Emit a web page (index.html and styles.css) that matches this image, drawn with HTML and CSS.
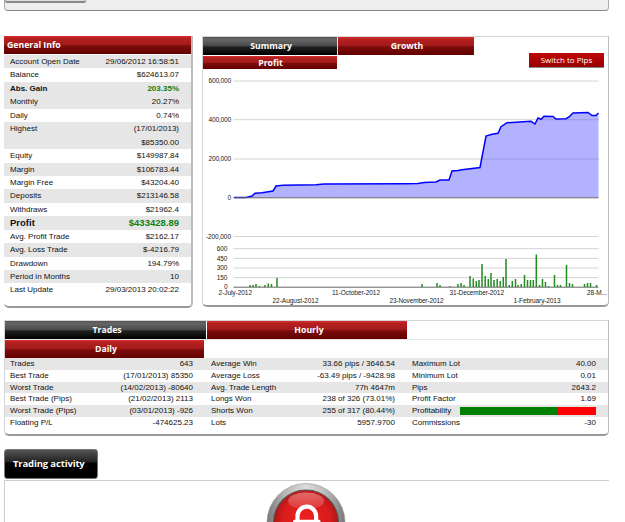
FILE: index.html
```html
<!DOCTYPE html>
<html lang="en">
<head>
  <meta charset="UTF-8">
  <title>Account Statistics</title>
  <link rel="stylesheet" href="styles.css">
</head>
<body>
  <div class="page">
    <div class="top-panel"><div class="top-button"></div></div>

    <div class="overview">
      <div class="panel info">
        <h2 class="bar">General Info</h2>
        <ul class="rows">
          <li class="alt"><span>Account Open Date</span><span>29/06/2012 16:58:51</span></li>
          <li><span>Balance</span><span>$624613.07</span></li>
          <li class="alt strong"><span>Abs. Gain</span><span class="green">203.35%</span></li>
          <li class="alt"><span>Monthly</span><span>20.27%</span></li>
          <li><span>Daily</span><span>0.74%</span></li>
          <li class="alt tall"><span>Highest</span><span>(17/01/2013)<br>$85350.00</span></li>
          <li><span>Equity</span><span>$149987.84</span></li>
          <li class="alt"><span>Margin</span><span>$106783.44</span></li>
          <li><span>Margin Free</span><span>$43204.40</span></li>
          <li class="alt"><span>Deposits</span><span>$213146.58</span></li>
          <li><span>Withdraws</span><span>$21962.4</span></li>
          <li class="alt profit"><span>Profit</span><span class="green">$433428.89</span></li>
          <li><span>Avg. Profit Trade</span><span>$2162.17</span></li>
          <li class="alt"><span>Avg. Loss Trade</span><span>$-4216.79</span></li>
          <li><span>Drawdown</span><span>194.79%</span></li>
          <li class="alt"><span>Period in Months</span><span>10</span></li>
          <li><span>Last Update</span><span>29/03/2013 20:02:22</span></li>
        </ul>
      </div>

      <div class="panel summary">
        <div class="tabs">
          <div class="bar tab active">Summary</div>
          <div class="bar tab growth">Growth</div>
        </div>
        <div class="tabs second">
          <div class="bar tab cut">Profit</div>
          <div class="switch">Switch to Pips</div>
        </div>
        <svg class="chart" width="406" height="236" viewBox="202 69 406 236">
          <g class="grid">
            <path d="M233.500 81H598.500M233.500 119.700H598.500M233.500 159H598.500M233.500 236.500H598.500"/>
            <path d="M233.500 248.700H598.500M233.500 258.400H598.500M233.500 268H598.500M233.500 277.600H598.500"/>
          </g>
          <path class="area" d="M234 197.500H246L252 196 255 193.300 262 192.700 273 191 276 186 283 185.300 316 184.800 324 184 405 183.800 418 183.500 424 182.500 436 182 440 180 449 180 452 171 458 170.500 462 169.700 480 167.500 486 136 492 134.300 498 133.300 501 126.700 507 122.700 531 121.300 535 124 538 118 541 119.300 544 116.300 553 116.500 556 119 566 118.700 569 117 573 113 588 112.500 592 115.500 596 115.500 598.500 113V197.500Z"/>
          <path class="under" d="M482 159H598.500M541 119.700H598.500"/>
          <path class="line" d="M234 197.500H246L252 196 255 193.300 262 192.700 273 191 276 186 283 185.300 316 184.800 324 184 405 183.800 418 183.500 424 182.500 436 182 440 180 449 180 452 171 458 170.500 462 169.700 480 167.500 486 136 492 134.300 498 133.300 501 126.700 507 122.700 531 121.300 535 124 538 118 541 119.300 544 116.300 553 116.500 556 119 566 118.700 569 117 573 113 588 112.500 592 115.500 596 115.500 598.500 113"/>
          <path class="axis" d="M233.500 197.800H598.500M233.500 287.200H598.500"/>
          <path class="bars" d="M250 287v-2M253 287v-2M256 287v-3M259.500 287v-1M265 287v-2M268.300 287v-3.500M271.500 287v-3M277 287v-9M422 287v-3M437 287v-4M440 287v-2M450 287v-1M458 287v-3M461 287v-4M464 287v-2M470 287v-11M473.300 287v-8.500M476.300 287v-6M479 287v-7M482 287v-23M485.200 287v-11M488.300 287v-8M491 287v-14M494 287v-7M497.200 287v-8M500.200 287v-6M503.300 287v-10M506 287v-28M509.300 287v-2M512.300 287v-6M515.500 287v-8M518 287v-2M521.200 287v-3M524.500 287v-12M527.500 287v-7M530.500 287v-7M533.300 287v-7M536.300 287v-32.500M539.500 287v-2M542.500 287v-8M545.500 287v-5M548.500 287v-1M554.500 287v-12M557.500 287v-2M560.500 287v-2M566.500 287v-22M569.500 287v-4M572.500 287v-3M584.500 287v-3M587.500 287v-4M590.500 287v-4M596.500 287v-2"/>
          <g class="labels end">
            <text x="231" y="83.300" textLength="22.500">600,000</text>
            <text x="231" y="122" textLength="22.500">400,000</text>
            <text x="231" y="161.300" textLength="22.500">200,000</text>
            <text x="231" y="200">0</text>
            <text x="231" y="238.800" textLength="25">-200,000</text>
            <text x="227.500" y="251.300">600</text>
            <text x="227.500" y="261">450</text>
            <text x="227.500" y="270.300">300</text>
            <text x="227.500" y="280">150</text>
            <text x="227.500" y="288.800">0</text>
          </g>
          <g class="labels">
            <text x="218.500" y="294.700" textLength="33.500">2-July-2012</text>
            <text x="332" y="294.700" textLength="48">11-October-2012</text>
            <text x="449.500" y="294.700" textLength="54.500">31-December-2012</text>
            <text x="587" y="294.700" textLength="20">28-M...</text>
            <text x="272.500" y="302.700" textLength="46">22-August-2012</text>
            <text x="389.500" y="302.700" textLength="54">23-November-2012</text>
            <text x="513.500" y="302.700" textLength="47">1-February-2013</text>
          </g>
        </svg>
      </div>
    </div>

    <div class="panel trades">
      <div class="tabs">
        <div class="bar tab active">Trades</div>
        <div class="bar tab hourly">Hourly</div>
      </div>
      <div class="tabs third">
        <div class="bar tab">Daily</div>
      </div>
      <div class="stats">
        <ul class="rows">
          <li class="alt"><span>Trades</span><span>643</span></li>
          <li><span>Best Trade</span><span>(17/01/2013) 85350</span></li>
          <li class="alt"><span>Worst Trade</span><span>(14/02/2013) -80640</span></li>
          <li><span>Best Trade (Pips)</span><span>(21/02/2013) 2113</span></li>
          <li class="alt"><span>Worst Trade (Pips)</span><span>(03/01/2013) -926</span></li>
          <li><span>Floating P/L</span><span>-474625.23</span></li>
        </ul>
        <ul class="rows">
          <li class="alt"><span>Average Win</span><span>33.66 pips / 3646.54</span></li>
          <li><span>Average Loss</span><span>-63.49 pips / -9428.98</span></li>
          <li class="alt"><span>Avg. Trade Length</span><span>77h 4647m</span></li>
          <li><span>Longs Won</span><span>238 of 326 (73.01%)</span></li>
          <li class="alt"><span>Shorts Won</span><span>255 of 317 (80.44%)</span></li>
          <li><span>Lots</span><span>5957.9700</span></li>
        </ul>
        <ul class="rows">
          <li class="alt"><span>Maximum Lot</span><span>40.00</span></li>
          <li><span>Minimum Lot</span><span>0.01</span></li>
          <li class="alt"><span>Pips</span><span>2643.2</span></li>
          <li><span>Profit Factor</span><span>1.69</span></li>
          <li class="alt"><span>Profitability</span><span class="ratio"><i style="width: 71.6%"></i></span></li>
          <li><span>Commissions</span><span>-30</span></li>
        </ul>
      </div>
    </div>

    <div class="activity-title">Trading activity</div>
    <div class="activity">
      <svg width="80" height="42" viewBox="266 481 80 42">
        <defs>
          <linearGradient id="ring" x1="0" y1="0" x2="1" y2="0">
            <stop offset="0" stop-color="#777"/>
            <stop offset=".22" stop-color="#b5b5b5"/>
            <stop offset=".5" stop-color="#ddd"/>
            <stop offset=".78" stop-color="#b5b5b5"/>
            <stop offset="1" stop-color="#777"/>
          </linearGradient>
          <radialGradient id="red" cx=".5" cy=".45" r=".55">
            <stop offset="0" stop-color="#f02020"/>
            <stop offset=".65" stop-color="#d81c1c"/>
            <stop offset="1" stop-color="#9c1414"/>
          </radialGradient>
          <linearGradient id="shine" x1="0" y1="0" x2="0" y2="1">
            <stop offset="0" stop-color="#fff" stop-opacity=".35"/>
            <stop offset="1" stop-color="#fff" stop-opacity=".1"/>
          </linearGradient>
        </defs>
        <circle cx="306" cy="522.500" r="39" fill="url(#ring)" stroke="#999" stroke-width=".7"/>
        <circle cx="306" cy="522.500" r="32.500" fill="url(#red)" stroke="#555" stroke-width="1.200"/>
        <ellipse cx="306" cy="501" rx="18" ry="8.500" fill="url(#shine)"/>
        <path d="M297.500 521V516a9.300 9.300 0 0 1 18.600 0V521" fill="none" stroke="#fff" stroke-width="4.200"/>
        <rect x="293" y="519.800" width="27.500" height="5" rx="1.500" fill="#fff"/>
      </svg>
    </div>
  </div>
</body>
</html>
```

FILE: styles.css
```css
* {
  box-sizing: border-box;
}
body {
  margin: 0;
  height: 522px;
  overflow: hidden;
  background: #fff;
  color: #111;
  font-family: "Liberation Sans", Arial, sans-serif;
  font-size: 8px;
}
.page {
  width: 605px;
  margin-left: 4px;
}
.top-panel {
  height: 11px;
  background: #eee;
  border: 1px solid #aaa;
  border-top: none;
  border-bottom-color: #888;
  border-radius: 0 0 4px 4px;
}
.top-button {
  width: 81px;
  height: 3px;
  background: #ddd;
  border: 1px solid #999;
  border-top: none;
  border-bottom: 2px solid #888;
  border-radius: 0 0 2px 2px;
}
.panel {
  border: 1px solid #d5d5d5;
  border-right-color: #bbb;
  border-bottom: 2px solid #999;
  border-radius: 0 0 5px 5px;
  overflow: hidden;
}
.overview {
  display: flex;
  justify-content: space-between;
  margin-top: 25px;
}
.info {
  width: 189px;
  height: 272px;
  border-top: none;
  border-left: none;
  border-right-width: 2px;
}
.bar {
  margin: 0;
  height: 18px;
  line-height: 18px;
  font-family: "Open Sans", "Noto Sans", sans-serif;
  font-size: 8.7px;
  font-weight: bold;
  color: #fff;
  background: linear-gradient(#d83030, #b82020 12%, #a01a1a 50%, #7c0c0c 54%, #640000);
}
.info .bar {
  padding-left: 3px;
}
.rows {
  list-style-type: none;
  margin: 0;
  padding: 0;
}
.rows li {
  display: flex;
  justify-content: space-between;
  white-space: nowrap;
}
.rows li span:last-child {
  text-align: right;
}
.info .rows {
  padding-top: 1px;
}
.info .rows li {
  height: 13.45px;
  line-height: 13.45px;
  padding: 0 12px 0 6px;
}
.info .rows .tall {
  height: 26.9px;
}
.rows .alt {
  background: #e6e6e6;
}
.strong {
  font-weight: bold;
}
.rows .profit {
  font-size: 9.5px;
  font-weight: bold;
}
.green {
  color: #108010;
}
.summary {
  width: 407px;
  height: 271px;
}
.tabs {
  display: flex;
}
.tab {
  width: 135px;
  text-align: center;
}
.summary .tab {
  padding-left: 2px;
}
.active {
  background: linear-gradient(#555, #666 15%, #484848 50%, #222 54%, #000);
}
.summary .active {
  border-right: 1px solid #ddd;
}
.growth {
  width: 136px;
}
.second {
  height: 14px;
  justify-content: space-between;
  margin: 0 4px 0 -1px;
}
.second .cut {
  height: 13px;
  margin-top: 1px;
  line-height: 15px;
}
.switch {
  width: 75px;
  height: 15px;
  margin-top: -2px;
  line-height: 14px;
  text-align: center;
  color: #fff;
  font-family: "Open Sans", "Noto Sans", sans-serif;
  font-size: 8px;
  background: linear-gradient(#c00808, #980000);
  border-bottom: 1px solid #888;
}
.chart {
  display: block;
  margin-left: -1px;
}
.grid path {
  stroke: #d4d4d4;
  fill: none;
}
.area {
  fill: #b2b2ff;
}
.under {
  stroke: #9a9ae0;
}
.line {
  fill: none;
  stroke: #0000ff;
  stroke-width: 1.5;
}
.axis {
  stroke: #666;
  stroke-width: 1;
}
.bars {
  stroke: #228b22;
  stroke-width: 1.5;
}
.labels {
  font-size: 6.5px;
  fill: #222;
}
.end {
  text-anchor: end;
}
.trades {
  height: 116px;
  margin-top: 12px;
}
.trades .tabs {
  margin-left: -1px;
}
.trades .tab {
  width: 202px;
  padding-left: 4px;
}
.trades .hourly {
  width: 200px;
  margin-left: 1px;
}
.trades .third {
  border-top: 1px solid #e8e8e8;
}
.trades .third .tab {
  width: 200px;
}
.stats {
  display: grid;
  grid-template-columns: 201px 201px 201px;
}
.stats li {
  height: 11.75px;
  line-height: 11.75px;
  padding: 0 12px 0 5px;
}
.stats .rows:first-child li {
  padding-right: 13px;
}
.ratio {
  width: 136px;
  height: 7.5px;
  margin-top: 2px;
  background: #f00;
}
.ratio i {
  display: block;
  height: 100%;
  background: #008000;
}
.activity-title {
  width: 94px;
  height: 30px;
  margin-top: 13px;
  padding-left: 8px;
  border: 1px solid #777;
  border-radius: 3px;
  background: linear-gradient(#555, #222 42%, #000 48%);
  color: #fff;
  font: bold 9.5px/27px "Open Sans", "Noto Sans", sans-serif;
  letter-spacing: -0.15px;
}
.activity {
  height: 42px;
  margin-top: 1px;
  border-top: 1px solid #ccc;
  border-left: 1px solid #ccc;
}
.activity svg {
  display: block;
  margin-left: 261px;
}
```
